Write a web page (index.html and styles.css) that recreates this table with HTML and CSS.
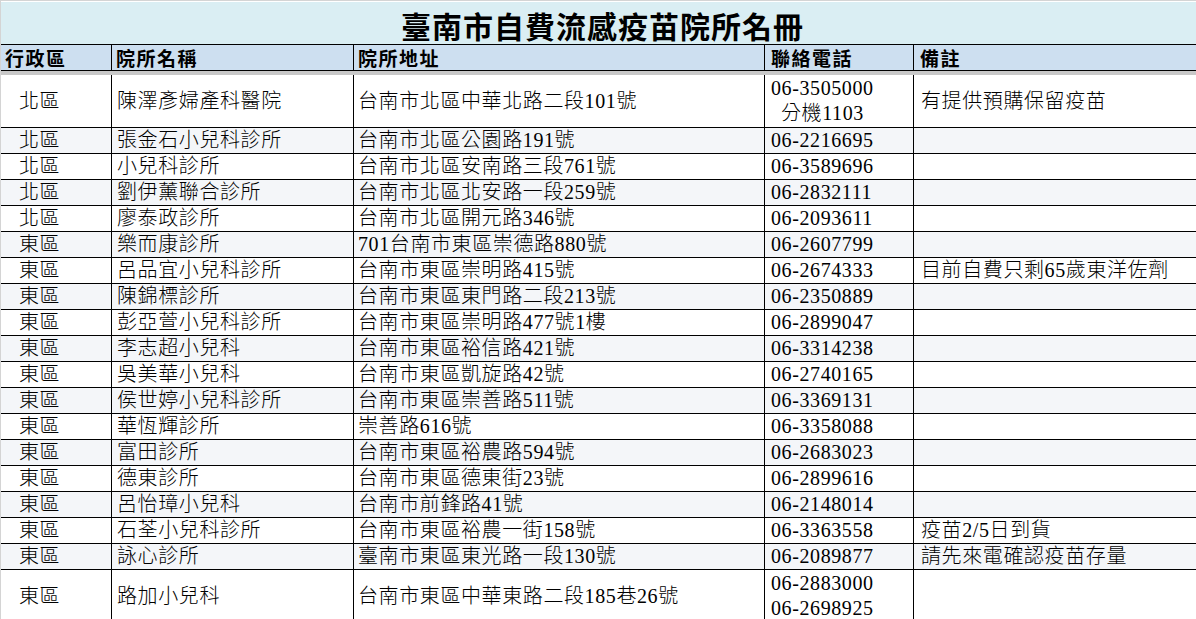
FILE: index.html
```html
<!DOCTYPE html>
<html lang="zh-Hant">
<head>
<meta charset="utf-8">
<title>臺南市自費流感疫苗院所名冊</title>
<link rel="stylesheet" href="styles.css">
</head>
<body>
<div class="sheet">
  <div class="topstrip"></div>
  <div class="title"><h1>臺南市自費流感疫苗院所名冊</h1></div>
  <div class="row head">
    <div class="c">行政區</div>
    <div class="c">院所名稱</div>
    <div class="c">院所地址</div>
    <div class="c">聯絡電話</div>
    <div class="c last">備註</div>
  </div>
  <div class="freeze"></div>
  <div class="row tall">
    <div class="c dist">北區</div>
    <div class="c">陳澤彥婦產科醫院</div>
    <div class="c">台南市北區中華北路二段101號</div>
    <div class="c multi"><span>06-3505000</span><span class="ext">分機1103</span></div>
    <div class="c last">有提供預購保留疫苗</div>
  </div>
  <div class="row alt">
    <div class="c dist">北區</div><div class="c">張金石小兒科診所</div><div class="c">台南市北區公園路191號</div><div class="c">06-2216695</div><div class="c last"></div>
  </div>
  <div class="row">
    <div class="c dist">北區</div><div class="c">小兒科診所</div><div class="c">台南市北區安南路三段761號</div><div class="c">06-3589696</div><div class="c last"></div>
  </div>
  <div class="row alt">
    <div class="c dist">北區</div><div class="c">劉伊薰聯合診所</div><div class="c">台南市北區北安路一段259號</div><div class="c">06-2832111</div><div class="c last"></div>
  </div>
  <div class="row">
    <div class="c dist">北區</div><div class="c">廖泰政診所</div><div class="c">台南市北區開元路346號</div><div class="c">06-2093611</div><div class="c last"></div>
  </div>
  <div class="row alt">
    <div class="c dist">東區</div><div class="c">樂而康診所</div><div class="c">701台南市東區崇德路880號</div><div class="c">06-2607799</div><div class="c last"></div>
  </div>
  <div class="row">
    <div class="c dist">東區</div><div class="c">呂品宜小兒科診所</div><div class="c">台南市東區崇明路415號</div><div class="c">06-2674333</div><div class="c last">目前自費只剩65歲東洋佐劑</div>
  </div>
  <div class="row alt">
    <div class="c dist">東區</div><div class="c">陳錦標診所</div><div class="c">台南市東區東門路二段213號</div><div class="c">06-2350889</div><div class="c last"></div>
  </div>
  <div class="row">
    <div class="c dist">東區</div><div class="c">彭亞萱小兒科診所</div><div class="c">台南市東區崇明路477號1樓</div><div class="c">06-2899047</div><div class="c last"></div>
  </div>
  <div class="row alt">
    <div class="c dist">東區</div><div class="c">李志超小兒科</div><div class="c">台南市東區裕信路421號</div><div class="c">06-3314238</div><div class="c last"></div>
  </div>
  <div class="row">
    <div class="c dist">東區</div><div class="c">吳美華小兒科</div><div class="c">台南市東區凱旋路42號</div><div class="c">06-2740165</div><div class="c last"></div>
  </div>
  <div class="row alt">
    <div class="c dist">東區</div><div class="c">侯世婷小兒科診所</div><div class="c">台南市東區崇善路511號</div><div class="c">06-3369131</div><div class="c last"></div>
  </div>
  <div class="row">
    <div class="c dist">東區</div><div class="c">華恆輝診所</div><div class="c">崇善路616號</div><div class="c">06-3358088</div><div class="c last"></div>
  </div>
  <div class="row alt">
    <div class="c dist">東區</div><div class="c">富田診所</div><div class="c">台南市東區裕農路594號</div><div class="c">06-2683023</div><div class="c last"></div>
  </div>
  <div class="row">
    <div class="c dist">東區</div><div class="c">德東診所</div><div class="c">台南市東區德東街23號</div><div class="c">06-2899616</div><div class="c last"></div>
  </div>
  <div class="row alt">
    <div class="c dist">東區</div><div class="c">呂怡璋小兒科</div><div class="c">台南市前鋒路41號</div><div class="c">06-2148014</div><div class="c last"></div>
  </div>
  <div class="row">
    <div class="c dist">東區</div><div class="c">石荃小兒科診所</div><div class="c">台南市東區裕農一街158號</div><div class="c">06-3363558</div><div class="c last">疫苗2/5日到貨</div>
  </div>
  <div class="row alt">
    <div class="c dist">東區</div><div class="c">詠心診所</div><div class="c">臺南市東區東光路一段130號</div><div class="c">06-2089877</div><div class="c last">請先來電確認疫苗存量</div>
  </div>
  <div class="row tall">
    <div class="c dist">東區</div>
    <div class="c">路加小兒科</div>
    <div class="c">台南市東區中華東路二段185巷26號</div>
    <div class="c multi"><span>06-2883000</span><span>06-2698925</span></div>
    <div class="c last"></div>
  </div>
</div>
</body>
</html>
```

FILE: styles.css
```css
html, body {
  margin: 0;
  padding: 0;
  background: #ffffff;
}

body {
  font-family: "Liberation Serif", "Noto Sans CJK TC", serif;
  font-size: 20px;
  font-weight: 300;
  color: #000000;
  overflow: hidden;
}

.sheet {
  width: 1196px;
  display: flex;
  flex-direction: column;
  border-left: 1px solid #d4d4d4;
  box-sizing: border-box;
}

.topstrip {
  height: 1px;
  border-top: 1px solid #d4d4d4;
}

.title {
  height: 42px;
  background: #daeef3;
  display: flex;
  justify-content: center;
  align-items: flex-end;
  padding-left: 8px;
}

.title h1 {
  margin: 0;
  font-family: "Noto Sans CJK TC", sans-serif;
  font-weight: 700;
  font-size: 30px;
  line-height: 38px;
  letter-spacing: 1px;
  color: #000000;
}

.row {
  display: grid;
  grid-template-columns: 111px 242px 411px 149px 1fr;
  height: 26px;
}

.row.tall {
  height: 53px;
}

.row.alt {
  background: #f4f6f9;
}

.c {
  box-sizing: border-box;
  border-right: 1px solid #000000;
  border-bottom: 1px solid #000000;
  display: flex;
  align-items: center;
  padding-left: 5px;
  white-space: nowrap;
  overflow: hidden;
  letter-spacing: 0.6px;
  line-height: 25px;
}

.c:nth-child(3) {
  padding-left: 4px;
}

.c:nth-child(4) {
  padding-left: 6px;
}

.c:nth-child(5) {
  padding-left: 7px;
}

.c.last {
  border-right: none;
}

.c.dist {
  padding-left: 18px;
}

.head {
  height: 27px;
  background: #cddff0;
}

.head .c {
  border-top: 1px solid #000000;
  font-family: "Noto Sans CJK TC", sans-serif;
  font-weight: 700;
  font-size: 19px;
  letter-spacing: 1.5px;
  color: #000000;
  padding-left: 4px;
}

.head .c:nth-child(4) {
  padding-left: 6px;
}

.head .c:nth-child(5) {
  padding-left: 6px;
}

.freeze {
  height: 4px;
  background: #c8c8c8;
}

.multi {
  flex-direction: column;
  align-items: flex-start;
  justify-content: center;
  line-height: 25.5px;
}

.ext {
  padding-left: 10px;
}
```
